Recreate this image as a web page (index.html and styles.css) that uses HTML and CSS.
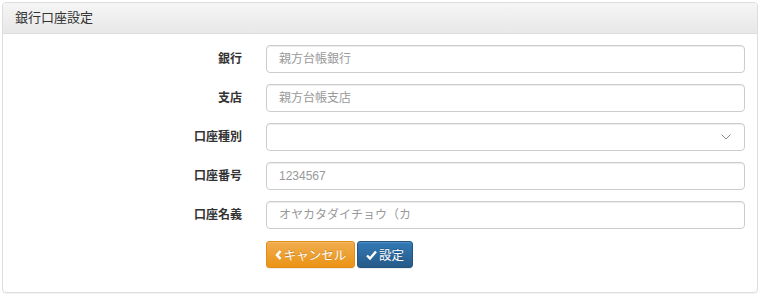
FILE: index.html
```
<!DOCTYPE html>
<html lang="ja">
<head>
<meta charset="utf-8">
<link rel="stylesheet" href="styles.css">
</head>
<body>
<div class="panel">
  <div class="panel-heading">銀行口座設定</div>
  <div class="panel-body">
    <div class="row"><label class="lbl">銀行</label><input class="ctl" placeholder="親方台帳銀行"></div>
    <div class="row"><label class="lbl">支店</label><input class="ctl" placeholder="親方台帳支店"></div>
    <div class="row"><label class="lbl">口座種別</label>
      <div class="ctl sel"><svg class="chev" width="10" height="6" viewBox="0 0 10 6"><path d="M0.5 0.5 L5 5 L9.5 0.5" fill="none" stroke="#888" stroke-width="1"/></svg></div>
    </div>
    <div class="row"><label class="lbl">口座番号</label><input class="ctl" placeholder="1234567"></div>
    <div class="row"><label class="lbl">口座名義</label><input class="ctl" placeholder="オヤカタダイチョウ（カ"></div>
    <div class="row btns">
      <button class="btn warn"><svg width="7" height="10" viewBox="0 0 7 10"><path d="M5.5 1 L2 5 L5.5 9" fill="none" stroke="#fff" stroke-width="2.6"/></svg>キャンセル</button>
      <button class="btn prim"><svg width="11" height="10" viewBox="0 0 11 10"><path d="M1 5.5 L4 8.5 L10 1.5" fill="none" stroke="#fff" stroke-width="2.4"/></svg>設定</button>
    </div>
  </div>
</div>
</body>
</html>
```
FILE: styles.css
```
html, body { margin: 0; padding: 0; background: #fff; }
body {
  padding: 2px;
  font-family: "Liberation Sans", "Noto Sans CJK JP", sans-serif;
  font-size: 12px;
  color: #333;
}
.panel {
  width: 754px;
  height: 289px;
  border: 1px solid #ddd;
  border-radius: 4px;
  box-shadow: 0 1px 1px rgba(0,0,0,0.05);
  overflow: hidden;
}
.panel-heading {
  height: 30px;
  line-height: 30px;
  padding: 0 12px;
  font-size: 13px;
  background: linear-gradient(#f5f5f5, #e8e8e8);
  border-bottom: 1px solid #ddd;
}
.panel-body {
  padding: 11px 0 0 0;
  display: flex;
  flex-direction: column;
  gap: 11px;
}
.row {
  display: flex;
  align-items: center;
  height: 28px;
}
.lbl {
  width: 239px;
  text-align: right;
  font-weight: bold;
  font-size: 12px;
  color: #333;
  line-height: 24px;
}
.ctl {
  box-sizing: border-box;
  margin-left: 24px;
  width: 479px;
  height: 28px;
  border: 1px solid #ccc;
  border-radius: 4px;
  padding: 0 12px;
  font-family: inherit;
  font-size: 12px;
  color: #555;
  box-shadow: inset 0 1px 1px rgba(0,0,0,0.075);
  outline: none;
}
.ctl::placeholder { color: #999; }
.sel {
  display: flex;
  align-items: center;
  justify-content: flex-end;
  padding-right: 13px;
}
.btns { padding-left: 263px; gap: 2px; margin-top: 1px; height: 27px; }
.btn {
  box-sizing: border-box;
  height: 27px;
  border-radius: 3px;
  color: #fff;
  font-family: inherit;
  font-size: 12.5px;
  padding: 0;
  display: flex;
  align-items: center;
  justify-content: center;
  gap: 2px;
  white-space: nowrap;
  text-shadow: 0 -1px 0 rgba(0,0,0,0.2);
  box-shadow: inset 0 1px 0 rgba(255,255,255,0.15), 0 1px 1px rgba(0,0,0,0.075);
}
.warn {
  width: 89px;
  background: linear-gradient(#f0ad4e, #eb9316);
  border: 1px solid #e38d13;
}
.prim {
  width: 56px;
  background: linear-gradient(#337ab7, #265a88);
  border: 1px solid #245580;
}
```
